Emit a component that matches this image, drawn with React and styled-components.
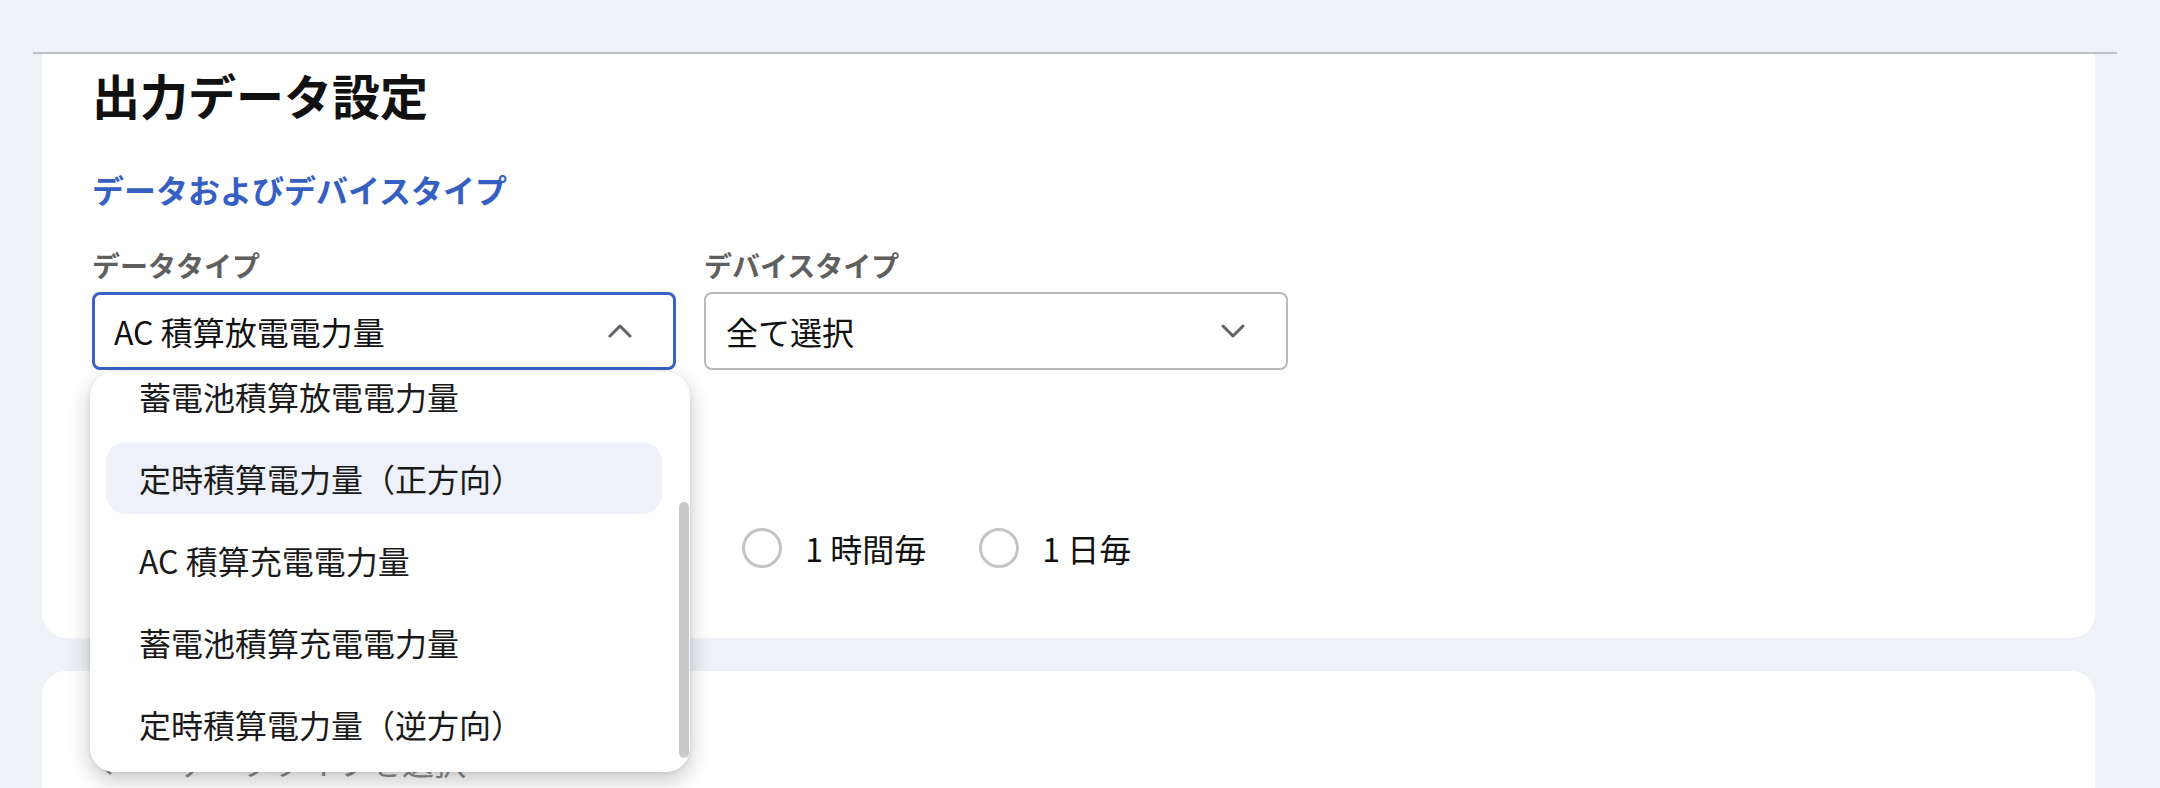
import React, {useEffect, useRef} from 'react';
import styled, {createGlobalStyle} from 'styled-components';

const GlobalStyle = createGlobalStyle`
    html, body {
        margin: 0;
        padding: 0;
        background: #eef1f6;
        font-family: "Noto Sans CJK JP", "Noto Sans", sans-serif;
        color: #111;
    }
`;

const Page = styled.div`
    height: 100vh;
    overflow: hidden;
    background: #eef1f6;
`;
const TopBar = styled.div`
    height: 52px;
    margin: 0 43px 0 33px;
    border-bottom: 2px solid #bdc0c4;
`;
const Card = styled.section`
    margin: ${({second}) => (second ? '33px 65px 0 42px' : '0 65px 0 42px')};
    padding: ${({second}) => (second ? '68px 50px 0' : '8px 50px 70px')};
    min-height: ${({second}) => (second ? '200px' : 'auto')};
    background: #fff;
    border-radius: ${({second}) => (second ? '24px 24px 0 0' : '0 0 24px 24px')};
`;
const Title = styled.h1`
    margin: 0;
    font-size: 48px;
    line-height: 64px;
    font-weight: 700;
`;
const SectionTitle = styled.h2`
    margin: 41px 0 0;
    font-size: 32px;
    line-height: 44px;
    font-weight: 700;
    color: #3560c2;
`;
const FieldsRow = styled.div`
    display: flex;
    gap: 28px;
    margin-top: 36px;
`;
const Field = styled.div`
    position: relative;
    width: 584px;
`;
const Label = styled.div`
    font-size: 28px;
    line-height: 36px;
    font-weight: 700;
    color: #5f5f5f;
    margin-bottom: ${({spaced}) => (spaced ? '0' : '9px')};
    margin-top: ${({spaced}) => (spaced ? '70px' : '0')};
`;
const SelectBox = styled.div`
    box-sizing: border-box;
    height: 78px;
    display: flex;
    align-items: center;
    justify-content: space-between;
    padding: 0 41px 0 ${({open}) => (open ? '19px' : '20px')};
    border: ${({open}) => (open ? '3px solid #3a62c4' : '2px solid #b9b9b9')};
    border-radius: 8px;
    font-size: 32px;
    background: #fff;
`;
const Menu = styled.div`
    position: absolute;
    z-index: 2;
    top: calc(100% + 2px);
    left: -2px;
    width: 600px;
    height: 400px;
    background: #fff;
    border-radius: 24px;
    overflow: hidden;
    box-shadow: 0 8px 22px rgba(0, 0, 0, 0.22), 0 1px 4px rgba(0, 0, 0, 0.08);
`;
const MenuList = styled.ul`
    box-sizing: border-box;
    height: 100%;
    margin: 0;
    padding: 12px 28px 12px 16px;
    list-style: none;
    overflow: hidden;
`;
const ScrollThumb = styled.div`
    position: absolute;
    top: 130px;
    right: 1px;
    width: 10px;
    height: 256px;
    border-radius: 5px;
    background: #c9c9c9;
`;
const MenuItem = styled.li`
    height: 72px;
    display: flex;
    align-items: center;
    padding-left: 33px;
    margin-bottom: 10px;
    border-radius: 20px;
    font-size: 32px;
    color: #1a1a1a;
    background: ${({active}) => (active ? '#eef1f9' : 'transparent')};

    &:last-child {
        margin-bottom: 0;
    }
`;
const RadioRow = styled.div`
    display: flex;
    gap: 53px;
    margin-top: 52px;
`;
const RadioOption = styled.label`
    display: flex;
    align-items: center;
    gap: 23px;
    font-size: 32px;
    line-height: 40px;
`;
const RadioCircle = styled.span`
    box-sizing: border-box;
    width: 40px;
    height: 40px;
    border-radius: 50%;
    border: 3.5px solid #c4c4c4;
`;
const BackRow = styled.div`
    display: flex;
    align-items: center;
    gap: 62px;
    font-size: 32px;
    line-height: 44px;
    color: #8a8a8a;
`;

const Chevron = ({up}) => (
    <svg width="24" height="14" viewBox="0 0 24 14" fill="none">
        <polyline
            points={up ? '2,12 12,2 22,12' : '2,2 12,12 22,2'}
            stroke="#5f6368"
            strokeWidth="3"
            strokeLinecap="round"
            strokeLinejoin="round"
        />
    </svg>
);

const options = [
    'PV 積算発電電力量',
    'AC 積算放電電力量',
    '蓄電池積算放電電力量',
    '定時積算電力量（正方向）',
    'AC 積算充電電力量',
    '蓄電池積算充電電力量',
    '定時積算電力量（逆方向）',
];
const intervals = ['5 分毎', '15 分毎', '30 分毎', '1 時間毎', '1 日毎'];

const App = () => {
    const listRef = useRef(null);

    // the list is scrolled to its end, as in the open dropdown
    useEffect(() => {
        if (listRef.current) listRef.current.scrollTop = listRef.current.scrollHeight;
    }, []);

    return (
        <Page>
            <GlobalStyle/>
            <TopBar/>
            <Card>
                <Title>出力データ設定</Title>
                <SectionTitle>データおよびデバイスタイプ</SectionTitle>
                <FieldsRow>
                    <Field>
                        <Label>データタイプ</Label>
                        <SelectBox open={true}>
                            <span>AC 積算放電電力量</span>
                            <Chevron up={true}/>
                        </SelectBox>
                        <Menu>
                            <MenuList ref={listRef}>
                                {options.map(option => (
                                    <MenuItem key={option} active={option === '定時積算電力量（正方向）'}>
                                        {option}
                                    </MenuItem>
                                ))}
                            </MenuList>
                            <ScrollThumb/>
                        </Menu>
                    </Field>
                    <Field>
                        <Label>デバイスタイプ</Label>
                        <SelectBox>
                            <span>全て選択</span>
                            <Chevron/>
                        </SelectBox>
                    </Field>
                </FieldsRow>
                <Label spaced={true}>出力間隔</Label>
                <RadioRow>
                    {intervals.map(interval => (
                        <RadioOption key={interval}>
                            <RadioCircle/>
                            {interval}
                        </RadioOption>
                    ))}
                </RadioRow>
            </Card>
            <Card second={true}>
                <BackRow>
                    <svg width="24" height="32" viewBox="0 0 24 32" fill="none">
                        <polyline points="18,4 6,16 18,28" stroke="#8a8a8a" strokeWidth="3" strokeLinecap="round"/>
                    </svg>
                    <span>データタイプを選択</span>
                </BackRow>
            </Card>
        </Page>
    );
};

export default App;
